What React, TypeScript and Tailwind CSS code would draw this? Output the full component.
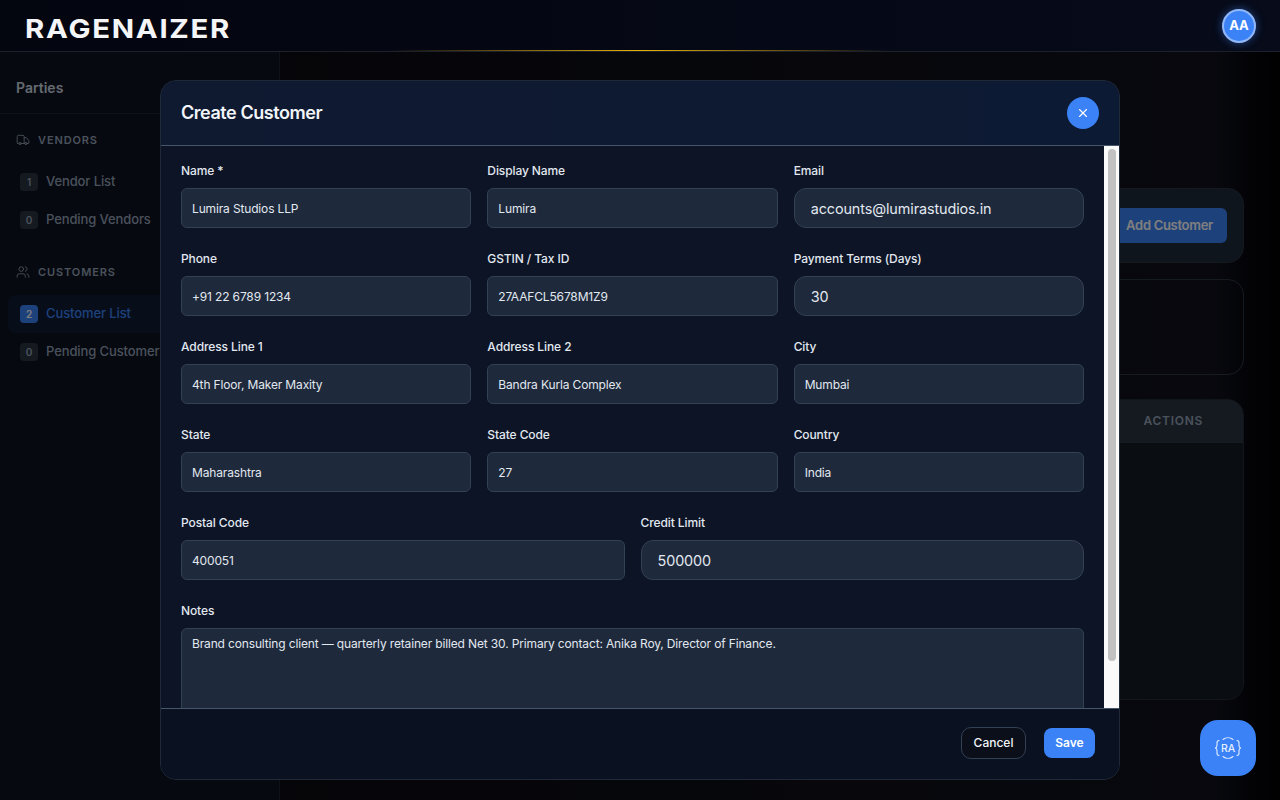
import { Truck, Users, X } from 'lucide-react'

const font = 'font-[Inter,sans-serif]'

interface FieldProps {
  label: string
  value: string
  big?: boolean
}

function Field({ label, value, big = false }: FieldProps) {
  return (
    <label className="flex flex-col">
      <span className="h-[18px] text-xs leading-[17px] font-medium tracking-[-0.1px] text-[#e2e8f0]">{label}</span>
      <input
        readOnly
        value={value}
        className={
          big
            ? 'mt-[8px] h-[40px] w-full rounded-[12px] border border-[#334155] bg-[#1e293b] px-4 text-[14.4px] tracking-[-0.1px] text-[#e2e8f0] outline-none'
            : 'mt-[8px] h-[40px] w-full rounded-[6px] border border-[#334155] bg-[#1e293b] px-[10px] text-xs tracking-[-0.15px] text-[#e2e8f0] outline-none'
        }
      />
    </label>
  )
}

function NavItem({ count, label, active = false }: { count: number; label: string; active?: boolean }) {
  return (
    <div className={`flex h-[38px] items-center gap-2 rounded-lg px-3 ${active ? 'bg-[#0f1c34]' : ''}`}>
      <span
        className={`flex h-[18px] w-[18px] shrink-0 items-center justify-center rounded text-[10px] font-semibold ${
          active ? 'bg-[#3b82f6] text-white' : 'bg-[#2a3442] text-[#94a3b8]'
        }`}
      >
        {count}
      </span>
      <span className={`text-[13px] font-medium tracking-[-0.1px] whitespace-nowrap ${active ? 'text-[#3b82f6]' : 'text-[#94a3b8]'}`}>
        {label}
      </span>
    </div>
  )
}

function Sidebar() {
  return (
    <aside className="w-[280px] shrink-0 border-r border-[#1e2430] bg-[#0d121f]">
      <div className="flex h-[62px] items-center border-b border-[#1c2230] px-4 pt-[10px]">
        <h2 className="text-sm font-semibold text-[#cbd5e1]">Parties</h2>
      </div>
      <div className="px-2 pt-[17px]">
        <div className="flex h-[18px] items-center gap-2 px-2 text-[11px] font-semibold tracking-[0.08em] text-[#94a3b8]">
          <Truck size={14} strokeWidth={1.5} />
          VENDORS
        </div>
        <div className="mt-[14px] flex flex-col">
          <NavItem count={1} label="Vendor List" />
          <NavItem count={0} label="Pending Vendors" />
        </div>
        <div className="mt-[24px] flex h-[18px] items-center gap-2 px-2 text-[11px] font-semibold tracking-[0.08em] text-[#94a3b8]">
          <Users size={14} strokeWidth={1.5} />
          CUSTOMERS
        </div>
        <div className="mt-[14px] flex flex-col">
          <NavItem count={2} label="Customer List" active />
          <NavItem count={0} label="Pending Customers" />
        </div>
      </div>
    </aside>
  )
}

function Page() {
  return (
    <main className="flex min-w-0 flex-1 flex-col gap-4 pl-[36px] pr-[36px] pt-[136px]">
      <div className="flex h-[75px] items-center justify-end rounded-[16px] border border-[#2a3440] bg-[#1e2a38] pr-[16px]">
        <button className="h-[35px] w-[115px] rounded-[6px] bg-[#3b82f6] text-[13px] font-semibold tracking-[-0.3px] text-white">
          Add Customer
        </button>
      </div>
      <div className="h-[96px] rounded-[16px] border border-[#2c3644]" />
      <div className="mt-2 h-[301px] overflow-hidden rounded-[16px] border border-[#232c38] bg-[#141c26]">
        <div className="flex h-[43px] items-center justify-end border-b border-[#2c3644] bg-[#2a3440] pr-[40px] text-xs font-semibold tracking-[0.06em] text-[#94a3b8]">
          ACTIONS
        </div>
      </div>
    </main>
  )
}

function Modal() {
  return (
    <div className="flex h-[700px] w-[960px] flex-col overflow-hidden rounded-[16px] border border-[#1f2937] bg-[#0c1425]">
      <div className="flex h-[65px] shrink-0 items-center justify-between border-b border-[#475569] bg-gradient-to-r from-[#0f1a31] to-[#0d1a33] pl-[20px] pr-[20px]">
        <h2 className="text-lg font-semibold tracking-[-0.45px] text-[#f1f5f9]">Create Customer</h2>
        <button className="flex h-8 w-8 items-center justify-center rounded-full bg-[#3b82f6] text-white">
          <X size={14} strokeWidth={2} />
        </button>
      </div>
      <div className="flex min-h-0 flex-1">
        <div className="min-w-0 flex-1 overflow-hidden pl-[20px] pr-[20px] pt-[16px]">
          <div className="grid grid-cols-3 gap-x-4 gap-y-[22px]">
            <Field label="Name *" value="Lumira Studios LLP" />
            <Field label="Display Name" value="Lumira" />
            <Field label="Email" value="accounts@lumirastudios.in" big />
            <Field label="Phone" value="+91 22 6789 1234" />
            <Field label="GSTIN / Tax ID" value="27AAFCL5678M1Z9" />
            <Field label="Payment Terms (Days)" value="30" big />
            <Field label="Address Line 1" value="4th Floor, Maker Maxity" />
            <Field label="Address Line 2" value="Bandra Kurla Complex" />
            <Field label="City" value="Mumbai" />
            <Field label="State" value="Maharashtra" />
            <Field label="State Code" value="27" />
            <Field label="Country" value="India" />
          </div>
          <div className="mt-[22px] grid grid-cols-2 gap-x-4">
            <Field label="Postal Code" value="400051" />
            <Field label="Credit Limit" value="500000" big />
          </div>
          <label className="mt-[22px] flex flex-col">
            <span className="h-[18px] text-xs leading-[17px] font-medium tracking-[-0.1px] text-[#e2e8f0]">Notes</span>
            <textarea
              readOnly
              rows={6}
              value="Brand consulting client — quarterly retainer billed Net 30. Primary contact: Anika Roy, Director of Finance."
              className="mt-[8px] w-full resize-none rounded-[6px] border border-[#334155] bg-[#1e293b] px-[10px] py-[7px] text-xs tracking-[-0.15px] text-[#e2e8f0] outline-none"
            />
          </label>
        </div>
        <div className="w-[15px] shrink-0 bg-[#fafafa] px-[4px] pb-[47px] pt-[3px]">
          <div className="h-full w-[8px] rounded-full bg-[#c1c1c1]" />
        </div>
      </div>
      <div className="flex h-[71px] shrink-0 items-center justify-end gap-[18px] border-t border-[#475569] bg-[#0a1120] pb-[2px] pr-[24px]">
        <button className="h-[32px] w-[65px] rounded-[10px] border border-[#334155] bg-[#0a0f1a] text-xs font-medium text-[#f1f5f9]">
          Cancel
        </button>
        <button className="h-[30px] w-[51px] rounded-[8px] bg-[#3b82f6] text-xs font-semibold text-white">
          Save
        </button>
      </div>
    </div>
  )
}

function AssistantIcon() {
  return (
    <svg width="28" height="24" viewBox="0 0 28 24" fill="none" stroke="#e6efff" strokeWidth="1.1" strokeLinecap="round">
      <path d="M5 4.5c-1.8 0-2 .9-2 2.5v2.5c0 1.4-.6 2.2-1.8 2.5 1.2.3 1.8 1.1 1.8 2.5V17c0 1.6.2 2.5 2 2.5" />
      <path d="M23 4.5c1.8 0 2 .9 2 2.5v2.5c0 1.4.6 2.2 1.8 2.5-1.2.3-1.8 1.1-1.8 2.5V17c0 1.6-.2 2.5-2 2.5" />
      <path d="M9 3.5a8 8 0 0 1 10 0" />
      <path d="M9 20.5a8 8 0 0 0 10 0" />
      <text x="14" y="15.8" textAnchor="middle" fontSize="10.5" fontWeight="500" fill="#e6efff" stroke="none" fontFamily="Inter, sans-serif">
        RA
      </text>
    </svg>
  )
}

export default function App() {
  return (
    <div className={`relative flex h-screen w-full flex-col overflow-hidden bg-gradient-to-r from-[#0a0a10] via-[#10111c] via-95% to-[#020204] ${font}`}>
      <header className="relative z-20 flex h-[52px] shrink-0 items-center justify-between border-b border-[#1c212b] bg-gradient-to-r from-[#03050f] to-[#070b1a] pl-[25px] pr-[24px]">
        <span className="mt-[6px] origin-left scale-x-[1.13] text-[26px] leading-none font-bold tracking-[1.5px] text-[#f4f5f7]">RAGENAIZER</span>
        <div className="flex h-[34px] w-[34px] items-center justify-center rounded-full border-2 border-[#93b8f8] bg-[#3b82f6] text-[13px] font-bold text-white shadow-[0_0_8px_rgba(59,130,246,0.5)]">
          AA
        </div>
        <div className="absolute bottom-0 left-[390px] h-px w-[500px] bg-gradient-to-r from-transparent via-[#eab308] to-transparent" />
      </header>
      <div className="flex min-h-0 flex-1">
        <Sidebar />
        <Page />
      </div>
      <div className="absolute inset-0 z-10 flex justify-center bg-black/50 pt-[80px]">
        <Modal />
      </div>
      <button className="absolute bottom-[24px] right-[24px] z-20 flex h-14 w-14 items-center justify-center rounded-[18px] bg-[#3b82f6]">
        <AssistantIcon />
      </button>
    </div>
  )
}
